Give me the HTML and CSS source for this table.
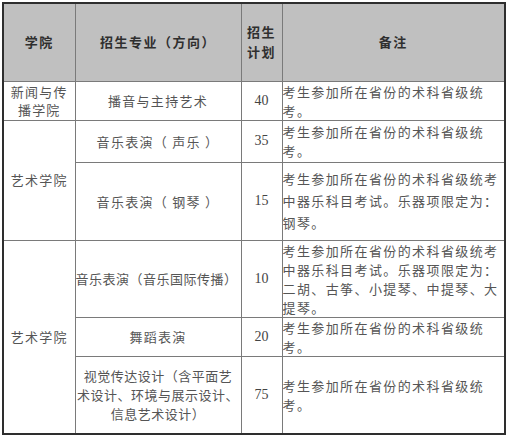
FILE: index.html
```html
<!DOCTYPE html>
<html lang="zh">
<head>
<meta charset="utf-8">
<link rel="stylesheet" href="styles.css">
</head>
<body>
<table class="plan">
  <colgroup>
    <col class="c-school">
    <col class="c-major">
    <col class="c-num">
    <col class="c-note">
  </colgroup>
  <thead>
    <tr class="r-head">
      <th>学院</th>
      <th>招生专业（方向）</th>
      <th class="th-num">招生<br>计划</th>
      <th>备注</th>
    </tr>
  </thead>
  <tbody>
    <tr class="r1">
      <td class="school">新闻与传播学院</td>
      <td class="major">播音与主持艺术</td>
      <td class="num">40</td>
      <td class="note">考生参加所在省份的术科省级统考。</td>
    </tr>
    <tr class="r2">
      <td class="school" rowspan="2">艺术学院</td>
      <td class="major">音乐表演（ 声乐 ）</td>
      <td class="num">35</td>
      <td class="note">考生参加所在省份的术科省级统考。</td>
    </tr>
    <tr class="r3">
      <td class="major">音乐表演（ 钢琴 ）</td>
      <td class="num">15</td>
      <td class="note note-loose">考生参加所在省份的术科省级统考中器乐科目考试。乐器项限定为：钢琴。</td>
    </tr>
    <tr class="r4">
      <td class="school" rowspan="3">艺术学院</td>
      <td class="major major-wide">音乐表演（音乐国际传播）</td>
      <td class="num">10</td>
      <td class="note">考生参加所在省份的术科省级统考中器乐科目考试。乐器项限定为：二胡、古筝、小提琴、中提琴、大提琴。</td>
    </tr>
    <tr class="r5">
      <td class="major">舞蹈表演</td>
      <td class="num">20</td>
      <td class="note">考生参加所在省份的术科省级统考。</td>
    </tr>
    <tr class="r6">
      <td class="major major-multi">视觉传达设计（含平面艺<br>术设计、环境与展示设计、<br>信息艺术设计）</td>
      <td class="num">75</td>
      <td class="note">考生参加所在省份的术科省级统考。</td>
    </tr>
  </tbody>
</table>
</body>
</html>
```

FILE: styles.css
```css
html, body {
  margin: 0;
  padding: 0;
  background: #ffffff;
}

body {
  padding: 2px 0 0 2px;
  font-family: "Noto Sans CJK SC", "Noto Sans", sans-serif;
  color: #555555;
}

.plan {
  width: 502px;
  table-layout: fixed;
  border-collapse: collapse;
  border: 2px solid #2e2e2e;
}

.c-school { width: 72px; }
.c-major { width: 166px; }
.c-num { width: 41px; }
.c-note { width: 223px; }

.plan th,
.plan td {
  border: 1px solid #7a7a7a;
  padding: 0;
  vertical-align: middle;
  overflow: hidden;
}

.plan th {
  background: #c0c0c0;
  color: #2f2f2f;
  font-weight: 700;
  font-size: 13px;
  letter-spacing: 1.5px;
  line-height: 20px;
  text-align: center;
}

.r-head { height: 78px; }
.r1 { height: 38px; }
.r2 { height: 42px; }
.r3 { height: 78px; }
.r4 { height: 77px; }
.r5 { height: 39px; }
.r6 { height: 78px; }

.school {
  font-size: 13px;
  letter-spacing: 1.2px;
  line-height: 18px;
  text-align: center;
  padding: 0 4px;
}

.major {
  font-size: 13px;
  letter-spacing: 1.3px;
  line-height: 19px;
  text-align: center;
  white-space: nowrap;
}

.major-wide {
  text-align: left;
  padding-left: 2px;
  letter-spacing: 0.5px;
}

.major-multi {
  letter-spacing: 0.5px;
  line-height: 19px;
}

.num {
  font-family: "Liberation Serif", "Times New Roman", serif;
  font-size: 14px;
  color: #444444;
  text-align: center;
}

.note {
  font-size: 13px;
  letter-spacing: 1.4px;
  line-height: 19px;
  text-align: left;
  padding: 0 0 0 2px;
}

.note-loose {
  line-height: 22px;
}
```
